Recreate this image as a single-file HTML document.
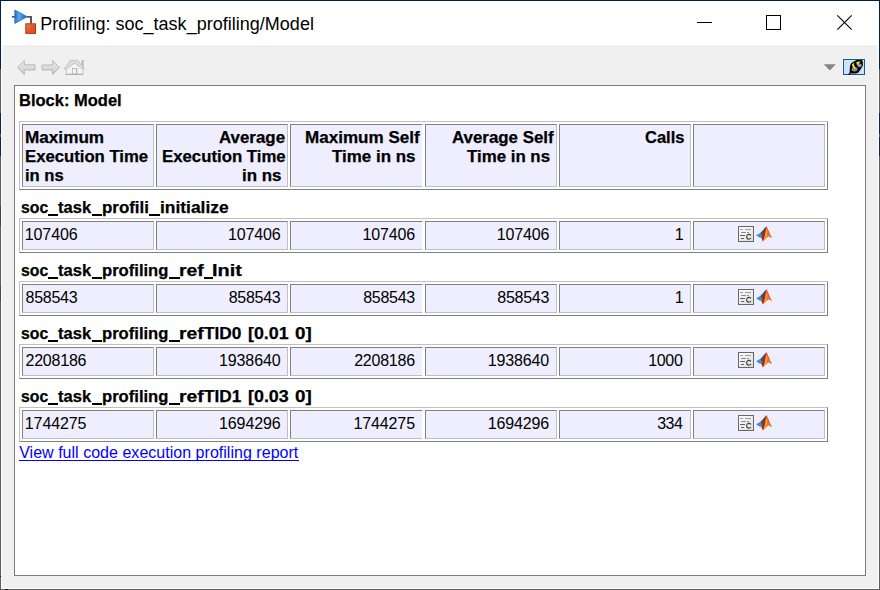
<!DOCTYPE html>
<html><head><meta charset="utf-8"><title>Profiling</title>
<style>
html,body{margin:0;padding:0}
body{width:880px;height:590px;position:relative;overflow:hidden;background:#f0f0f0;font-family:"Liberation Sans",sans-serif}
div,span,svg{position:absolute;box-sizing:border-box}
.t{white-space:pre;line-height:normal}
.tb{background:#fff;border:1px solid;border-color:#c0c0c0 #808080 #808080 #c0c0c0}
.c{background:#eeeeff;border:1px solid;border-color:#808080 #c0c0c0 #c0c0c0 #808080}
</style></head><body>
<!-- window frame -->
<div style="left:0;top:0;width:880px;height:590px;background:#5e5e5e"></div>
<div style="left:0;top:0;width:880px;height:69px;background:#021f4d"></div>
<div style="left:0;top:113px;width:880px;height:21px;background:#0a2450"></div>
<div style="left:0;top:137px;width:880px;height:19px;background:#0a2450"></div>
<div style="left:0;top:206px;width:1px;height:20px;background:#3c4454"></div>
<div style="left:0;top:286px;width:1px;height:16px;background:#444a58"></div>
<div style="left:0;top:576px;width:1px;height:1px;background:#111"></div>
<div style="left:5px;top:589px;width:3px;height:1px;background:#111"></div>
<div style="left:1px;top:1px;width:878px;height:588px;background:#fff"></div>
<div style="left:2px;top:45px;width:876px;height:543px;background:#f0f0f0"></div>
<!-- content box -->
<div style="left:14px;top:85px;width:852px;height:491px;background:#fff;border:1px solid #7c7c7c"></div>
<div class="tb" style="left:19px;top:121px;width:809px;height:69px"></div>
<div class="c" style="left:22px;top:124px;width:132px;height:63px"></div>
<div class="c" style="left:156px;top:124px;width:132px;height:63px"></div>
<div class="c" style="left:290px;top:124px;width:133px;height:63px;border-right-color:#fff"></div>
<div class="c" style="left:425px;top:124px;width:132px;height:63px"></div>
<div class="c" style="left:559px;top:124px;width:132px;height:63px"></div>
<div class="c" style="left:693px;top:124px;width:132px;height:63px"></div>
<div class="tb" style="left:19px;top:218px;width:809px;height:35px"></div>
<div class="c" style="left:22px;top:221px;width:132px;height:29px"></div>
<div class="c" style="left:156px;top:221px;width:132px;height:29px"></div>
<div class="c" style="left:290px;top:221px;width:133px;height:29px;border-right-color:#fff"></div>
<div class="c" style="left:425px;top:221px;width:132px;height:29px"></div>
<div class="c" style="left:559px;top:221px;width:132px;height:29px"></div>
<div class="c" style="left:693px;top:221px;width:132px;height:29px"></div>
<div class="tb" style="left:19px;top:281px;width:809px;height:35px"></div>
<div class="c" style="left:22px;top:284px;width:132px;height:29px"></div>
<div class="c" style="left:156px;top:284px;width:132px;height:29px"></div>
<div class="c" style="left:290px;top:284px;width:133px;height:29px;border-right-color:#fff"></div>
<div class="c" style="left:425px;top:284px;width:132px;height:29px"></div>
<div class="c" style="left:559px;top:284px;width:132px;height:29px"></div>
<div class="c" style="left:693px;top:284px;width:132px;height:29px"></div>
<div class="tb" style="left:19px;top:344px;width:809px;height:35px"></div>
<div class="c" style="left:22px;top:347px;width:132px;height:29px"></div>
<div class="c" style="left:156px;top:347px;width:132px;height:29px"></div>
<div class="c" style="left:290px;top:347px;width:133px;height:29px;border-right-color:#fff"></div>
<div class="c" style="left:425px;top:347px;width:132px;height:29px"></div>
<div class="c" style="left:559px;top:347px;width:132px;height:29px"></div>
<div class="c" style="left:693px;top:347px;width:132px;height:29px"></div>
<div class="tb" style="left:19px;top:407px;width:809px;height:35px"></div>
<div class="c" style="left:22px;top:410px;width:132px;height:29px"></div>
<div class="c" style="left:156px;top:410px;width:132px;height:29px"></div>
<div class="c" style="left:290px;top:410px;width:133px;height:29px;border-right-color:#fff"></div>
<div class="c" style="left:425px;top:410px;width:132px;height:29px"></div>
<div class="c" style="left:559px;top:410px;width:132px;height:29px"></div>
<div class="c" style="left:693px;top:410px;width:132px;height:29px"></div>
<svg width="880" height="590" viewBox="0 0 880 590" style="left:0;top:0">
<defs>
<linearGradient id="gTri" x1="0" y1="0" x2="1" y2="0"><stop offset="0" stop-color="#2670c4"/><stop offset="0.35" stop-color="#56a8ee"/><stop offset="1" stop-color="#1c5eae"/></linearGradient>
<linearGradient id="gSq" x1="0" y1="0" x2="1" y2="1"><stop offset="0" stop-color="#e8883c"/><stop offset="0.5" stop-color="#e25a24"/><stop offset="1" stop-color="#d8481c"/></linearGradient>
<linearGradient id="gCode" x1="0" y1="0" x2="1" y2="1"><stop offset="0" stop-color="#ffffff"/><stop offset="1" stop-color="#dcdcdc"/></linearGradient>
<linearGradient id="gArrow" x1="0" y1="0" x2="0" y2="1"><stop offset="0" stop-color="#ececec"/><stop offset="1" stop-color="#cccccc"/></linearGradient>
</defs>
<!-- app icon -->
<g id="appicon">
<rect x="12" y="16" width="3.2" height="1.7" fill="#555"/>
<path d="M27 16 H32 V23.6 H30 V17.7 H27 Z" fill="#555"/>
<path d="M14.8 10 L27.2 16.7 L14.8 23.4 Z" fill="url(#gTri)" stroke="#2368ba" stroke-width="0.8" stroke-linejoin="round"/>
<rect x="25.8" y="23.8" width="9.7" height="9.6" fill="url(#gSq)" stroke="#a62c10" stroke-width="0.9"/>
</g>
<!-- window controls -->
<g shape-rendering="crispEdges" fill="none" stroke="#000" stroke-width="1">
<line x1="697" y1="22.5" x2="712" y2="22.5"/>
<rect x="766.5" y="15.5" width="14" height="14"/>
</g>
<g fill="none" stroke="#000" stroke-width="1.1">
<line x1="837.3" y1="15.3" x2="851.7" y2="29.7"/><line x1="851.7" y1="15.3" x2="837.3" y2="29.7"/>
</g>
<!-- toolbar nav icons (disabled) -->
<g fill="url(#gArrow)" stroke="#b2b2b2" stroke-width="0.9" stroke-linejoin="round">
<path d="M17.6 67.5 L24.3 60.5 V64.8 H35 V70 H24.3 V74.5 Z"/>
<path d="M59.4 67.5 L52.6 60.5 V65 H42 V70 H52.6 V74.5 Z"/>
</g>
<g id="home">
<rect x="81.6" y="60" width="1.9" height="7" fill="#b4b4b4"/>
<path d="M64.4 68.8 L70.4 60.4 H77.6 L84.5 68.6 L83 69.6 L74.6 62.8 L66.2 70 Z" fill="#dedede" stroke="#b6b6b6" stroke-width="0.8" stroke-linejoin="round"/>
<path d="M66.4 69.6 L74.6 63 L82.8 69.6 V74.4 H66.4 Z" fill="#f4f4f4" stroke="#bcbcbc" stroke-width="0.7"/>
<rect x="72.4" y="68.4" width="4.2" height="5.8" fill="#f2f2f2" stroke="#b4b4b4" stroke-width="0.8"/>
<rect x="76.2" y="68" width="1" height="6.4" fill="#b0b0b0"/>
<rect x="65.6" y="73.8" width="17.8" height="1" fill="#a8a8a8"/>
</g>
<!-- dropdown -->
<path d="M823.8 64.2 H835.8 L829.8 70.6 Z" fill="#858585"/>
<!-- search button -->
<rect x="842.5" y="58.5" width="23" height="17" fill="none" stroke="#fbf3ea" stroke-width="1"/>
<rect x="843.5" y="59.5" width="21" height="15" fill="#cce4f7" stroke="#0a58a8" stroke-width="1" shape-rendering="crispEdges"/>
<path d="M848 74.6 L849.6 72.6 L850 66 Q850.4 63.2 853 62 L856.6 60 H862 Q863.6 62 863 65.4 L861.8 67.6 L858.6 72.4 L856 73.4 H850.4 L849.4 74.8 Z" fill="#050505"/>
<ellipse cx="854.6" cy="69.2" rx="2.9" ry="2.2" fill="#8c8c8c"/>
<ellipse cx="859.6" cy="65.4" rx="2.2" ry="1.8" fill="#9a9a9a"/>
<path d="M852 64.4 L853.6 62.8 L854.2 65.4 L856 68.4 L854.6 68.8 L852.4 66.4 Z" fill="#f4ee1c"/>
<path d="M856.4 62 L860.6 61.2 L858.4 64.2 L856.8 65 Z" fill="#f6f01e"/>
<g transform="translate(0,0)">
<rect x="738.5" y="226.5" width="15" height="15" fill="url(#gCode)" stroke="#666" stroke-width="1"/>
<g shape-rendering="crispEdges">
<rect x="740" y="229" width="3" height="1" fill="#a0a0a0"/><rect x="745" y="229" width="6" height="1" fill="#a0a0a0"/>
<rect x="741" y="232" width="5" height="1" fill="#8c8c8c"/><rect x="747" y="232" width="2" height="1" fill="#8c8c8c"/>
<rect x="740" y="235" width="5" height="1" fill="#606060"/>
<rect x="741" y="238" width="3" height="1" fill="#606060"/>
</g>
<path d="M751 235.4 Q750 234.3 748.6 234.4 Q746.6 234.7 746.6 236.8 Q746.6 239 748.7 239.1 Q750.2 239.1 751 238" fill="none" stroke="#404040" stroke-width="1.1"/>
<path d="M756 235.2 L760.6 232.8 L764 229.2 L766.3 226.2 L765 231 L763 235.6 L761.6 238 L759.4 237.4 Z" fill="#3d8fd6"/>
<path d="M760.6 232.8 L763.4 229.8 L765.6 227 L764.4 233 L762.4 236.6 Z" fill="#1f5c9e"/>
<path d="M761 233.4 L763 232.4 L766.4 226.2 L767.4 228 L767 232 L764.6 238.4 L762.8 241.6 L761.4 238 L762.4 235.4 Z" fill="#a82a12"/>
<path d="M766.4 226.2 L768.4 230.6 L770.2 235 L772 238.2 L770 237 L768.2 236.4 L766 238.4 L762.8 241.8 L764.4 237.4 L765.8 232 Z" fill="#ec7a22"/>
<path d="M766.6 227.4 L768.6 232.4 L770.4 236.4 L772 238.2 L770.2 235 L768.4 230.6 Z" fill="#c8401a"/>
<path d="M766.2 228.4 L767.2 232.4 L766 237.6 L763.6 240.6 L765 236 Z" fill="#f6a83c"/>
</g>
<g transform="translate(0,63)">
<rect x="738.5" y="226.5" width="15" height="15" fill="url(#gCode)" stroke="#666" stroke-width="1"/>
<g shape-rendering="crispEdges">
<rect x="740" y="229" width="3" height="1" fill="#a0a0a0"/><rect x="745" y="229" width="6" height="1" fill="#a0a0a0"/>
<rect x="741" y="232" width="5" height="1" fill="#8c8c8c"/><rect x="747" y="232" width="2" height="1" fill="#8c8c8c"/>
<rect x="740" y="235" width="5" height="1" fill="#606060"/>
<rect x="741" y="238" width="3" height="1" fill="#606060"/>
</g>
<path d="M751 235.4 Q750 234.3 748.6 234.4 Q746.6 234.7 746.6 236.8 Q746.6 239 748.7 239.1 Q750.2 239.1 751 238" fill="none" stroke="#404040" stroke-width="1.1"/>
<path d="M756 235.2 L760.6 232.8 L764 229.2 L766.3 226.2 L765 231 L763 235.6 L761.6 238 L759.4 237.4 Z" fill="#3d8fd6"/>
<path d="M760.6 232.8 L763.4 229.8 L765.6 227 L764.4 233 L762.4 236.6 Z" fill="#1f5c9e"/>
<path d="M761 233.4 L763 232.4 L766.4 226.2 L767.4 228 L767 232 L764.6 238.4 L762.8 241.6 L761.4 238 L762.4 235.4 Z" fill="#a82a12"/>
<path d="M766.4 226.2 L768.4 230.6 L770.2 235 L772 238.2 L770 237 L768.2 236.4 L766 238.4 L762.8 241.8 L764.4 237.4 L765.8 232 Z" fill="#ec7a22"/>
<path d="M766.6 227.4 L768.6 232.4 L770.4 236.4 L772 238.2 L770.2 235 L768.4 230.6 Z" fill="#c8401a"/>
<path d="M766.2 228.4 L767.2 232.4 L766 237.6 L763.6 240.6 L765 236 Z" fill="#f6a83c"/>
</g>
<g transform="translate(0,126)">
<rect x="738.5" y="226.5" width="15" height="15" fill="url(#gCode)" stroke="#666" stroke-width="1"/>
<g shape-rendering="crispEdges">
<rect x="740" y="229" width="3" height="1" fill="#a0a0a0"/><rect x="745" y="229" width="6" height="1" fill="#a0a0a0"/>
<rect x="741" y="232" width="5" height="1" fill="#8c8c8c"/><rect x="747" y="232" width="2" height="1" fill="#8c8c8c"/>
<rect x="740" y="235" width="5" height="1" fill="#606060"/>
<rect x="741" y="238" width="3" height="1" fill="#606060"/>
</g>
<path d="M751 235.4 Q750 234.3 748.6 234.4 Q746.6 234.7 746.6 236.8 Q746.6 239 748.7 239.1 Q750.2 239.1 751 238" fill="none" stroke="#404040" stroke-width="1.1"/>
<path d="M756 235.2 L760.6 232.8 L764 229.2 L766.3 226.2 L765 231 L763 235.6 L761.6 238 L759.4 237.4 Z" fill="#3d8fd6"/>
<path d="M760.6 232.8 L763.4 229.8 L765.6 227 L764.4 233 L762.4 236.6 Z" fill="#1f5c9e"/>
<path d="M761 233.4 L763 232.4 L766.4 226.2 L767.4 228 L767 232 L764.6 238.4 L762.8 241.6 L761.4 238 L762.4 235.4 Z" fill="#a82a12"/>
<path d="M766.4 226.2 L768.4 230.6 L770.2 235 L772 238.2 L770 237 L768.2 236.4 L766 238.4 L762.8 241.8 L764.4 237.4 L765.8 232 Z" fill="#ec7a22"/>
<path d="M766.6 227.4 L768.6 232.4 L770.4 236.4 L772 238.2 L770.2 235 L768.4 230.6 Z" fill="#c8401a"/>
<path d="M766.2 228.4 L767.2 232.4 L766 237.6 L763.6 240.6 L765 236 Z" fill="#f6a83c"/>
</g>
<g transform="translate(0,189)">
<rect x="738.5" y="226.5" width="15" height="15" fill="url(#gCode)" stroke="#666" stroke-width="1"/>
<g shape-rendering="crispEdges">
<rect x="740" y="229" width="3" height="1" fill="#a0a0a0"/><rect x="745" y="229" width="6" height="1" fill="#a0a0a0"/>
<rect x="741" y="232" width="5" height="1" fill="#8c8c8c"/><rect x="747" y="232" width="2" height="1" fill="#8c8c8c"/>
<rect x="740" y="235" width="5" height="1" fill="#606060"/>
<rect x="741" y="238" width="3" height="1" fill="#606060"/>
</g>
<path d="M751 235.4 Q750 234.3 748.6 234.4 Q746.6 234.7 746.6 236.8 Q746.6 239 748.7 239.1 Q750.2 239.1 751 238" fill="none" stroke="#404040" stroke-width="1.1"/>
<path d="M756 235.2 L760.6 232.8 L764 229.2 L766.3 226.2 L765 231 L763 235.6 L761.6 238 L759.4 237.4 Z" fill="#3d8fd6"/>
<path d="M760.6 232.8 L763.4 229.8 L765.6 227 L764.4 233 L762.4 236.6 Z" fill="#1f5c9e"/>
<path d="M761 233.4 L763 232.4 L766.4 226.2 L767.4 228 L767 232 L764.6 238.4 L762.8 241.6 L761.4 238 L762.4 235.4 Z" fill="#a82a12"/>
<path d="M766.4 226.2 L768.4 230.6 L770.2 235 L772 238.2 L770 237 L768.2 236.4 L766 238.4 L762.8 241.8 L764.4 237.4 L765.8 232 Z" fill="#ec7a22"/>
<path d="M766.6 227.4 L768.6 232.4 L770.4 236.4 L772 238.2 L770.2 235 L768.4 230.6 Z" fill="#c8401a"/>
<path d="M766.2 228.4 L767.2 232.4 L766 237.6 L763.6 240.6 L765 236 Z" fill="#f6a83c"/>
</g>
</svg>

<span class="t" style="left:40.30px;top:14.42px;font-weight:400;font-size:18px;letter-spacing:0.014px;color:#000">Profiling: soc_task_profiling/Model</span>
<span class="t" style="left:18.92px;top:90.80px;font-weight:700;font-size:16.5px;color:#000;-webkit-text-stroke:0.25px #000;transform:scaleX(0.9999);transform-origin:0 0">Block: Model</span>
<span class="t" style="left:24.87px;top:127.80px;font-weight:700;font-size:16.5px;color:#000;-webkit-text-stroke:0.25px #000;transform:scaleX(1.0396);transform-origin:0 0">Maximum</span>
<span class="t" style="left:24.90px;top:146.80px;font-weight:700;font-size:16.5px;color:#000;-webkit-text-stroke:0.25px #000;transform:scaleX(1.0124);transform-origin:0 0">Execution Time</span>
<span class="t" style="left:24.90px;top:165.80px;font-weight:700;font-size:16.5px;color:#000;-webkit-text-stroke:0.25px #000;transform:scaleX(1.0059);transform-origin:0 0">in ns</span>
<span class="t" style="left:219.19px;top:127.80px;font-weight:700;font-size:16.5px;color:#000;-webkit-text-stroke:0.25px #000;transform:scaleX(1.0234);transform-origin:0 0">Average</span>
<span class="t" style="left:161.60px;top:146.80px;font-weight:700;font-size:16.5px;color:#000;-webkit-text-stroke:0.25px #000;transform:scaleX(1.0165);transform-origin:0 0">Execution Time</span>
<span class="t" style="left:241.98px;top:165.80px;font-weight:700;font-size:16.5px;color:#000;-webkit-text-stroke:0.25px #000;transform:scaleX(1.0249);transform-origin:0 0">in ns</span>
<span class="t" style="left:304.68px;top:127.80px;font-weight:700;font-size:16.5px;color:#000;-webkit-text-stroke:0.25px #000;transform:scaleX(1.0334);transform-origin:0 0">Maximum Self</span>
<span class="t" style="left:332.39px;top:146.80px;font-weight:700;font-size:16.5px;color:#000;-webkit-text-stroke:0.25px #000;transform:scaleX(1.0264);transform-origin:0 0">Time in ns</span>
<span class="t" style="left:452.39px;top:127.80px;font-weight:700;font-size:16.5px;color:#000;-webkit-text-stroke:0.25px #000;transform:scaleX(1.0230);transform-origin:0 0">Average Self</span>
<span class="t" style="left:466.99px;top:146.80px;font-weight:700;font-size:16.5px;color:#000;-webkit-text-stroke:0.25px #000;transform:scaleX(1.0214);transform-origin:0 0">Time in ns</span>
<span class="t" style="left:644.95px;top:127.80px;font-weight:700;font-size:16.5px;color:#000;-webkit-text-stroke:0.25px #000;transform:scaleX(0.9993);transform-origin:0 0">Calls</span>
<span class="t" style="left:20.89px;top:197.80px;font-weight:700;font-size:16.5px;color:#000;-webkit-text-stroke:0.25px #000;transform:scaleX(0.9571);transform-origin:0 0">soc</span>
<span class="t" style="left:58.38px;top:197.80px;font-weight:700;font-size:16.5px;color:#000;-webkit-text-stroke:0.25px #000;transform:scaleX(1.0023);transform-origin:0 0">task</span>
<span class="t" style="left:102.19px;top:197.80px;font-weight:700;font-size:16.5px;color:#000;-webkit-text-stroke:0.25px #000;transform:scaleX(1.0249);transform-origin:0 0">profili</span>
<span class="t" style="left:159.84px;top:197.80px;font-weight:700;font-size:16.5px;color:#000;-webkit-text-stroke:0.25px #000;transform:scaleX(1.0544);transform-origin:0 0">initialize</span>
<span class="t" style="left:20.89px;top:260.80px;font-weight:700;font-size:16.5px;color:#000;-webkit-text-stroke:0.25px #000;transform:scaleX(0.9571);transform-origin:0 0">soc</span>
<span class="t" style="left:58.38px;top:260.80px;font-weight:700;font-size:16.5px;color:#000;-webkit-text-stroke:0.25px #000;transform:scaleX(1.0023);transform-origin:0 0">task</span>
<span class="t" style="left:102.21px;top:260.80px;font-weight:700;font-size:16.5px;color:#000;-webkit-text-stroke:0.25px #000;transform:scaleX(1.0065);transform-origin:0 0">profiling</span>
<span class="t" style="left:179.13px;top:260.80px;font-weight:700;font-size:16.5px;color:#000;-webkit-text-stroke:0.25px #000;transform:scaleX(1.1750);transform-origin:0 0">ref</span>
<span class="t" style="left:211.89px;top:260.80px;font-weight:700;font-size:16.5px;color:#000;-webkit-text-stroke:0.25px #000;transform:scaleX(1.2057);transform-origin:0 0">Init</span>
<span class="t" style="left:20.89px;top:323.80px;font-weight:700;font-size:16.5px;color:#000;-webkit-text-stroke:0.25px #000;transform:scaleX(0.9571);transform-origin:0 0">soc</span>
<span class="t" style="left:58.38px;top:323.80px;font-weight:700;font-size:16.5px;color:#000;-webkit-text-stroke:0.25px #000;transform:scaleX(1.0023);transform-origin:0 0">task</span>
<span class="t" style="left:102.21px;top:323.80px;font-weight:700;font-size:16.5px;color:#000;-webkit-text-stroke:0.25px #000;transform:scaleX(1.0065);transform-origin:0 0">profiling</span>
<span class="t" style="left:179.13px;top:323.80px;font-weight:700;font-size:16.5px;color:#000;-webkit-text-stroke:0.25px #000;transform:scaleX(1.1750);transform-origin:0 0">ref</span>
<span class="t" style="left:204.29px;top:323.80px;font-weight:700;font-size:16.5px;color:#000;-webkit-text-stroke:0.25px #000;transform:scaleX(1.0468);transform-origin:0 0">TID0</span>
<span class="t" style="left:248.02px;top:323.80px;font-weight:700;font-size:16.5px;color:#000;-webkit-text-stroke:0.25px #000;transform:scaleX(1.0799);transform-origin:0 0">[0.01</span>
<span class="t" style="left:295.11px;top:323.80px;font-weight:700;font-size:16.5px;color:#000;-webkit-text-stroke:0.25px #000;transform:scaleX(1.1401);transform-origin:0 0">0]</span>
<span class="t" style="left:20.89px;top:386.80px;font-weight:700;font-size:16.5px;color:#000;-webkit-text-stroke:0.25px #000;transform:scaleX(0.9571);transform-origin:0 0">soc</span>
<span class="t" style="left:58.38px;top:386.80px;font-weight:700;font-size:16.5px;color:#000;-webkit-text-stroke:0.25px #000;transform:scaleX(1.0023);transform-origin:0 0">task</span>
<span class="t" style="left:102.21px;top:386.80px;font-weight:700;font-size:16.5px;color:#000;-webkit-text-stroke:0.25px #000;transform:scaleX(1.0065);transform-origin:0 0">profiling</span>
<span class="t" style="left:179.13px;top:386.80px;font-weight:700;font-size:16.5px;color:#000;-webkit-text-stroke:0.25px #000;transform:scaleX(1.1750);transform-origin:0 0">ref</span>
<span class="t" style="left:204.29px;top:386.80px;font-weight:700;font-size:16.5px;color:#000;-webkit-text-stroke:0.25px #000;transform:scaleX(1.0432);transform-origin:0 0">TID1</span>
<span class="t" style="left:248.02px;top:386.80px;font-weight:700;font-size:16.5px;color:#000;-webkit-text-stroke:0.25px #000;transform:scaleX(1.0826);transform-origin:0 0">[0.03</span>
<span class="t" style="left:295.11px;top:386.80px;font-weight:700;font-size:16.5px;color:#000;-webkit-text-stroke:0.25px #000;transform:scaleX(1.1401);transform-origin:0 0">0]</span>
<div style="left:26.99px;top:239px;width:6.2px;height:1px;background:#111"></div>
<span class="t" style="left:24.83px;top:226.26px;font-weight:400;font-size:16px;letter-spacing:-0.132px;color:#000">107406</span>
<div style="left:230.19px;top:239px;width:6.2px;height:1px;background:#111"></div>
<span class="t" style="left:228.03px;top:226.26px;font-weight:400;font-size:16px;letter-spacing:-0.132px;color:#000">107406</span>
<div style="left:364.59px;top:239px;width:6.2px;height:1px;background:#111"></div>
<span class="t" style="left:362.43px;top:226.26px;font-weight:400;font-size:16px;letter-spacing:-0.132px;color:#000">107406</span>
<div style="left:498.79px;top:239px;width:6.2px;height:1px;background:#111"></div>
<span class="t" style="left:496.63px;top:226.26px;font-weight:400;font-size:16px;letter-spacing:-0.132px;color:#000">107406</span>
<div style="left:676.99px;top:239px;width:6.2px;height:1px;background:#111"></div>
<span class="t" style="left:674.83px;top:226.26px;font-weight:400;font-size:16px;letter-spacing:0.000px;color:#000">1</span>
<span class="t" style="left:25.56px;top:289.26px;font-weight:400;font-size:16px;letter-spacing:-0.279px;color:#000">858543</span>
<span class="t" style="left:228.76px;top:289.26px;font-weight:400;font-size:16px;letter-spacing:-0.279px;color:#000">858543</span>
<span class="t" style="left:363.16px;top:289.26px;font-weight:400;font-size:16px;letter-spacing:-0.279px;color:#000">858543</span>
<span class="t" style="left:497.36px;top:289.26px;font-weight:400;font-size:16px;letter-spacing:-0.279px;color:#000">858543</span>
<div style="left:676.99px;top:302px;width:6.2px;height:1px;background:#111"></div>
<span class="t" style="left:674.83px;top:289.26px;font-weight:400;font-size:16px;letter-spacing:0.000px;color:#000">1</span>
<div style="left:62.38px;top:365px;width:6.2px;height:1px;background:#111"></div>
<span class="t" style="left:25.54px;top:352.26px;font-weight:400;font-size:16px;letter-spacing:-0.229px;color:#000">2208186</span>
<div style="left:221.19px;top:365px;width:6.2px;height:1px;background:#111"></div>
<span class="t" style="left:219.03px;top:352.26px;font-weight:400;font-size:16px;letter-spacing:-0.115px;color:#000">1938640</span>
<div style="left:390.98px;top:365px;width:6.2px;height:1px;background:#111"></div>
<span class="t" style="left:354.14px;top:352.26px;font-weight:400;font-size:16px;letter-spacing:-0.229px;color:#000">2208186</span>
<div style="left:489.79px;top:365px;width:6.2px;height:1px;background:#111"></div>
<span class="t" style="left:487.63px;top:352.26px;font-weight:400;font-size:16px;letter-spacing:-0.115px;color:#000">1938640</span>
<div style="left:650.29px;top:365px;width:6.2px;height:1px;background:#111"></div>
<span class="t" style="left:648.13px;top:352.26px;font-weight:400;font-size:16px;letter-spacing:-0.311px;color:#000">1000</span>
<div style="left:26.99px;top:428px;width:6.2px;height:1px;background:#111"></div>
<span class="t" style="left:24.83px;top:415.26px;font-weight:400;font-size:16px;letter-spacing:-0.113px;color:#000">1744275</span>
<div style="left:221.19px;top:428px;width:6.2px;height:1px;background:#111"></div>
<span class="t" style="left:219.03px;top:415.26px;font-weight:400;font-size:16px;letter-spacing:-0.110px;color:#000">1694296</span>
<div style="left:355.59px;top:428px;width:6.2px;height:1px;background:#111"></div>
<span class="t" style="left:353.43px;top:415.26px;font-weight:400;font-size:16px;letter-spacing:-0.113px;color:#000">1744275</span>
<div style="left:489.79px;top:428px;width:6.2px;height:1px;background:#111"></div>
<span class="t" style="left:487.63px;top:415.26px;font-weight:400;font-size:16px;letter-spacing:-0.110px;color:#000">1694296</span>
<span class="t" style="left:657.24px;top:415.26px;font-weight:400;font-size:16px;letter-spacing:-0.566px;color:#000">334</span>
<span class="t" style="left:19.20px;top:444.26px;font-weight:400;font-size:16px;letter-spacing:0.025px;color:#0000ff">View full code execution profiling report</span>
<div style="position:absolute;left:19.0px;top:460px;width:280.1px;height:1px;background:#0000ff"></div>
<div style="left:47.9px;top:214px;width:9.9px;height:2px;background:#000"></div>
<div style="left:91.8px;top:214px;width:10.4px;height:2px;background:#000"></div>
<div style="left:149.0px;top:214px;width:10.6px;height:2px;background:#000"></div>
<div style="left:47.9px;top:277px;width:9.9px;height:2px;background:#000"></div>
<div style="left:91.8px;top:277px;width:10.4px;height:2px;background:#000"></div>
<div style="left:169.0px;top:277px;width:10.6px;height:2px;background:#000"></div>
<div style="left:203.8px;top:277px;width:9.6px;height:2px;background:#000"></div>
<div style="left:47.9px;top:340px;width:9.9px;height:2px;background:#000"></div>
<div style="left:91.8px;top:340px;width:10.4px;height:2px;background:#000"></div>
<div style="left:169.0px;top:340px;width:10.6px;height:2px;background:#000"></div>
<div style="left:47.9px;top:403px;width:9.9px;height:2px;background:#000"></div>
<div style="left:91.8px;top:403px;width:10.4px;height:2px;background:#000"></div>
<div style="left:169.0px;top:403px;width:10.6px;height:2px;background:#000"></div>
</body></html>
